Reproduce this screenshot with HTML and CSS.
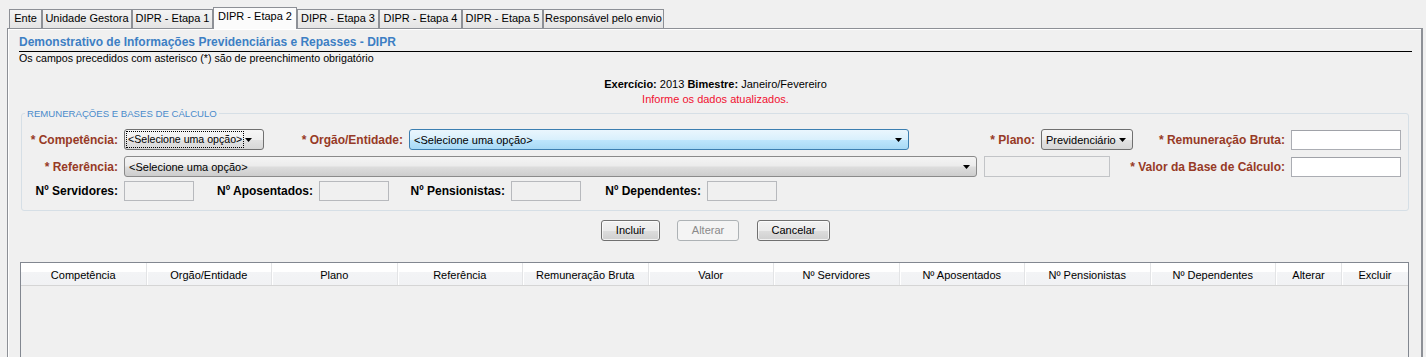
FILE: index.html
```html
<!DOCTYPE html>
<html lang="pt-BR">
<head>
<meta charset="utf-8">
<title>DIPR - Etapa 2</title>
<link rel="stylesheet" href="styles.css">
</head>
<body>
<div class="tabs">
  <div class="tab tab-ente">Ente</div>
  <div class="tab tab-ug">Unidade Gestora</div>
  <div class="tab tab-e1">DIPR - Etapa 1</div>
  <div class="tab tab-e2 active">DIPR - Etapa 2</div>
  <div class="tab tab-e3">DIPR - Etapa 3</div>
  <div class="tab tab-e4">DIPR - Etapa 4</div>
  <div class="tab tab-e5">DIPR - Etapa 5</div>
  <div class="tab tab-resp">Responsável pelo envio</div>
</div>
<div class="panel">
  <div class="title">Demonstrativo de Informações Previdenciárias e Repasses - DIPR</div>
  <div class="subtitle">Os campos precedidos com asterisco (*) são de preenchimento obrigatório</div>
  <div class="period"><b>Exercício:</b> 2013 <b>Bimestre:</b> Janeiro/Fevereiro</div>
  <div class="notice">Informe os dados atualizados.</div>

  <fieldset class="group">
    <legend>REMUNERAÇÕES E BASES DE CÁLCULO</legend>
    <div class="fields">
      <div class="row row-1">
        <label class="lbl req w102">* Competência:</label>
        <div class="sel sel-light w140"><span class="focus">&lt;Selecione uma opção&gt;</span><svg class="arrow arrow-far" width="7" height="4" viewBox="0 0 7 4"><path d="M0 0H7L3.5 4Z" fill="#000"/></svg></div>
        <label class="lbl req w145">* Orgão/Entidade:</label>
        <div class="sel sel-hover w500"><span class="sel-text">&lt;Selecione uma opção&gt;</span><svg class="arrow" width="7" height="4" viewBox="0 0 7 4"><path d="M0 0H7L3.5 4Z" fill="#000"/></svg></div>
        <label class="lbl req w132">* Plano:</label>
        <div class="sel sel-light w92"><span class="sel-text">Previdenciário</span><svg class="arrow" width="7" height="4" viewBox="0 0 7 4"><path d="M0 0H7L3.5 4Z" fill="#000"/></svg></div>
        <label class="lbl req w158">* Remuneração Bruta:</label>
        <div class="inp w110"></div>
      </div>
      <div class="row row-2">
        <label class="lbl req w102">* Referência:</label>
        <div class="sel sel-gray w853"><span class="sel-text">&lt;Selecione uma opção&gt;</span><svg class="arrow" width="7" height="4" viewBox="0 0 7 4"><path d="M0 0H7L3.5 4Z" fill="#000"/></svg></div>
        <div class="inp inp-off w126 gap7"></div>
        <label class="lbl req w181">* Valor da Base de Cálculo:</label>
        <div class="inp w110"></div>
      </div>
      <div class="row row-3">
        <label class="lbl w102">Nº Servidores:</label>
        <div class="inp inp-ro w70"></div>
        <label class="lbl w125">Nº Aposentados:</label>
        <div class="inp inp-ro w70"></div>
        <label class="lbl w122">Nº Pensionistas:</label>
        <div class="inp inp-ro w70"></div>
        <label class="lbl w126">Nº Dependentes:</label>
        <div class="inp inp-ro w70"></div>
      </div>
    </div>
  </fieldset>

  <div class="buttons">
    <div class="btn btn-incluir">Incluir</div>
    <div class="btn btn-alterar disabled">Alterar</div>
    <div class="btn btn-cancelar">Cancelar</div>
  </div>

  <div class="grid">
    <div class="grid-head">
      <div class="hc">Competência</div>
      <div class="hc">Orgão/Entidade</div>
      <div class="hc">Plano</div>
      <div class="hc">Referência</div>
      <div class="hc">Remuneração Bruta</div>
      <div class="hc">Valor</div>
      <div class="hc">Nº Servidores</div>
      <div class="hc">Nº Aposentados</div>
      <div class="hc">Nº Pensionistas</div>
      <div class="hc">Nº Dependentes</div>
      <div class="hc">Alterar</div>
      <div class="hc last">Excluir</div>
    </div>
    <div class="grid-body"></div>
  </div>
</div>
</body>
</html>
```

FILE: styles.css
```css
* { box-sizing: border-box; }
html, body { margin: 0; background: #f0f0f0; }
body {
  font-family: "Liberation Sans", Arial, sans-serif;
  font-size: 11px;
  color: #000;
  overflow: hidden;
  height: 357px;
}

/* Tabs */
.tabs {
  display: flex;
  align-items: flex-end;
  height: 28px;
  padding-left: 9px;
}
.tab {
  flex: none;
  height: 19px;
  border: 1px solid #8d9096;
  border-bottom: none;
  background: linear-gradient(#f4f4f4, #e4e4e4);
  text-align: center;
  line-height: 17px;
  white-space: nowrap;
  color: #000;
}
.tab.active {
  height: 22px;
  background: #fbfbfb;
  margin-bottom: -1px;
  position: relative;
  z-index: 1;
  line-height: 17px;
}
.tab-ente { width: 33px; }
.tab-ug { width: 90px; }
.tab-e1 { width: 81px; }
.tab-e2 { width: 84px; }
.tab-e3 { width: 82px; }
.tab-e4 { width: 83px; }
.tab-e5 { width: 81px; }
.tab-resp { width: 121px; }

/* Panel */
.panel {
  margin: 0 3px 0 7px;
  border: 1px solid #8d9096;
  border-right-width: 2px;
  border-bottom: none;
  background: #f0f0f0;
  box-shadow: inset 1px 1px 0 #fff;
  padding: 6px 9px 0 11px;
}
.title {
  font-weight: bold;
  font-size: 12px;
  line-height: 15px;
  color: #3d7fc4;
  border-bottom: 1px solid #000;
  padding-bottom: 1px;
}
.subtitle {
  font-size: 10.7px;
  line-height: 13px;
}
.period {
  margin-top: 12px;
  line-height: 15px;
  text-align: center;
}
.notice {
  line-height: 15px;
  text-align: center;
  color: #f01030;
}

/* Fieldset */
.group {
  margin: 0 3px 0 2px;
  padding: 0;
  border: 1px solid #d6dfe6;
  border-radius: 3px;
  min-width: 0;
}
.group legend {
  margin-left: 3px;
  padding: 0 2px;
  font-size: 9.6px;
  line-height: 13px;
  color: #4a8bcb;
}
.fields {
  padding: 9px 0 9px 0;
}
.row {
  display: flex;
  align-items: center;
  height: 21px;
}
.row-1 { margin-bottom: 6px; }
.row-2 { margin-bottom: 4px; }
.row-3 { height: 20px; }

.lbl {
  flex: none;
  text-align: right;
  padding-right: 6px;
  font-weight: bold;
  font-size: 12px;
  white-space: nowrap;
  color: #000;
}
.lbl.req { color: #973a26; }

.w70 { width: 70px; }
.w92 { width: 92px; }
.w102 { width: 102px; }
.w110 { width: 110px; }
.w122 { width: 122px; }
.w125 { width: 125px; }
.w126 { width: 126px; }
.w132 { width: 132px; }
.w140 { width: 140px; }
.w145 { width: 145px; }
.w158 { width: 158px; }
.w181 { width: 181px; }
.w500 { width: 500px; }
.w853 { width: 853px; }
.gap7 { margin-left: 7px; }

/* Selects */
.sel {
  flex: none;
  height: 21px;
  border: 1px solid #707070;
  border-radius: 3px;
  display: flex;
  align-items: center;
  padding-left: 3px;
  white-space: nowrap;
  overflow: hidden;
}
.sel-light {
  background: linear-gradient(#f6f6f6 0%, #efefef 50%, #e3e3e3 51%, #d7d7d7 100%);
}
.sel-gray {
  border-color: #8a8a8a;
  background: linear-gradient(#f4f4f4 0%, #ececec 45%, #dcdcdc 55%, #cdcdcd 100%);
}
.sel-hover {
  border-color: #3c7fb1;
  background: linear-gradient(#eaf6fd 0%, #d9f0fc 50%, #bee6fd 51%, #a7d9f5 100%);
}
.sel-text { padding-left: 1px; }
.sel-light .focus { margin-left: -1px; }
.focus {
  flex: none;
  outline: 1px dotted #000;
  outline-offset: 0;
  padding: 1px 1px;
  font-size: 10.6px;
  line-height: 13px;
}
.arrow {
  flex: none;
  margin-left: auto;
  margin-right: 6px;
}
.arrow-far { margin-right: 11px; }

/* Inputs */
.inp {
  flex: none;
  height: 20px;
  border: 1px solid #abadb3;
  border-top-color: #a0a2a8;
  background: #fff;
}
.inp-ro {
  background: #f0f0f0;
  border-color: #b7b9bd;
}
.inp-off {
  height: 21px;
  background: #f0f0f0;
  border-color: #c2c4c7;
}

/* Buttons */
.buttons {
  display: flex;
  justify-content: center;
  margin-top: 9px;
}
.btn {
  height: 21px;
  border: 1px solid #707070;
  border-radius: 3px;
  background: linear-gradient(#f2f2f2 0%, #ebebeb 50%, #dddddd 51%, #cfcfcf 100%);
  box-shadow: inset 0 0 0 1px rgba(255, 255, 255, 0.7);
  text-align: center;
  line-height: 19px;
  color: #000;
}
.btn-incluir { width: 59px; }
.btn-alterar { width: 62px; margin-left: 17px; }
.btn-cancelar { width: 73px; margin-left: 18px; }
.btn.disabled {
  border-color: #adb2b5;
  background: #f4f4f4;
  box-shadow: none;
  color: #8a8a8a;
}

/* Grid */
.grid {
  margin: 21px 3px 0 1px;
  border: 1px solid #828790;
  border-bottom: none;
}
.grid-head {
  display: grid;
  grid-template-columns: repeat(10, 1fr) 66px 66px;
  height: 23px;
  background: linear-gradient(#ffffff 0%, #ffffff 40%, #f3f4f6 41%, #f1f2f4 100%);
  border-bottom: 1px solid #d5d5d5;
}
.hc {
  border-right: 1px solid #e3e4e6;
  box-shadow: 1px 0 0 #fff;
  text-align: center;
  padding-top: 2px;
  line-height: 20px;
  white-space: nowrap;
  overflow: hidden;
}
.hc.last { border-right: none; box-shadow: none; }
.grid-body {
  height: 120px;
  background: #f0f0f0;
}
```
